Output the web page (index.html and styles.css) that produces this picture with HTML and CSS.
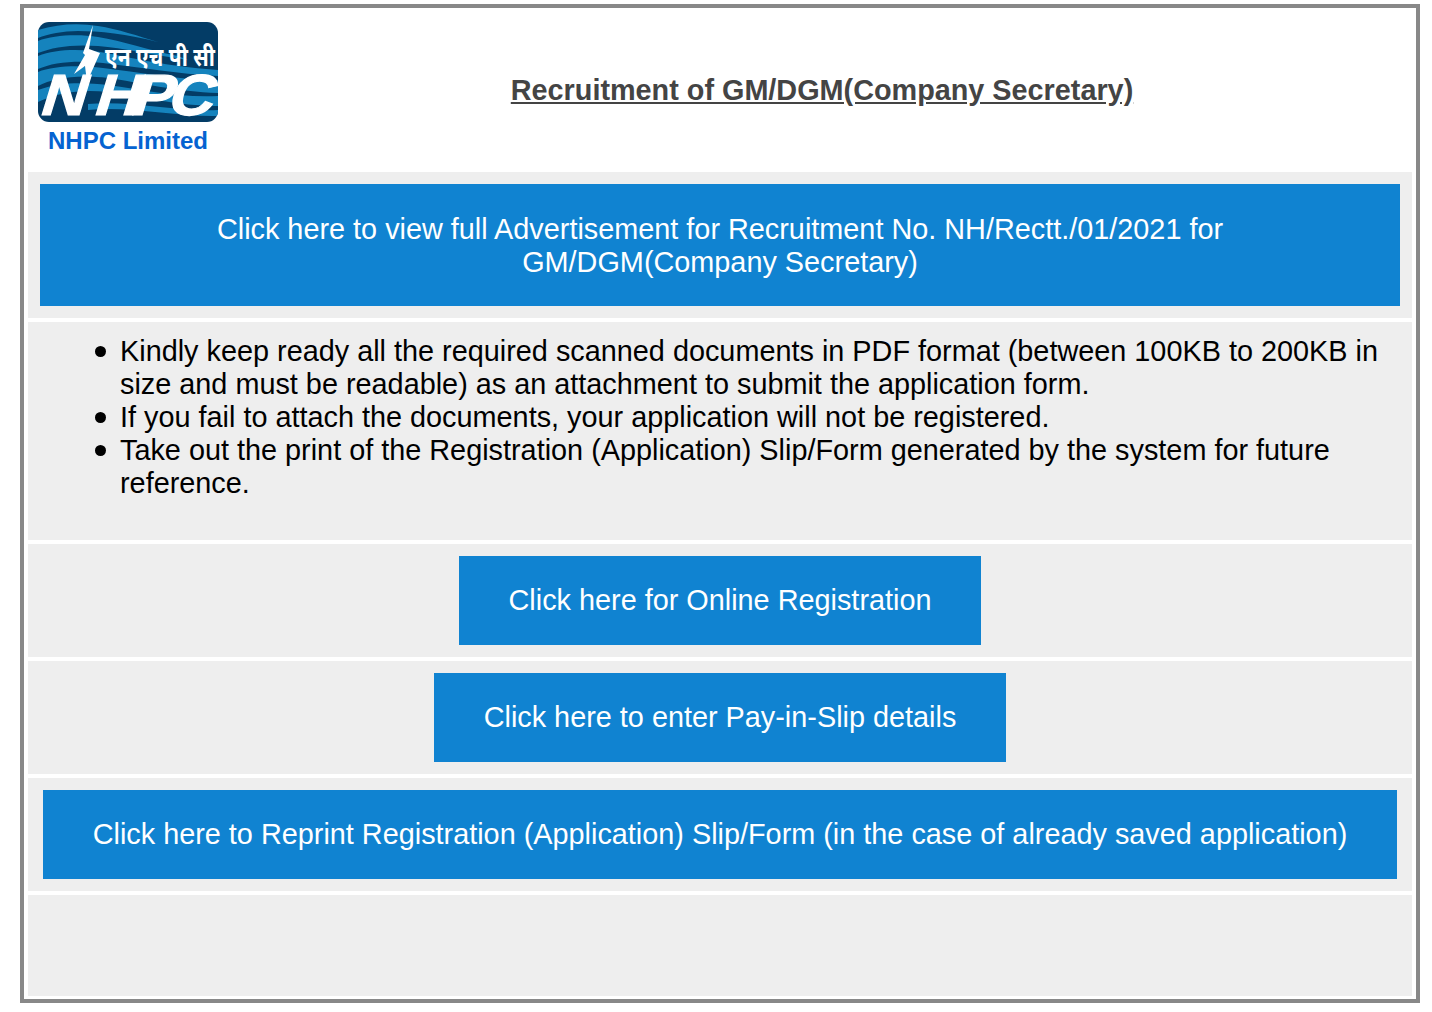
FILE: index.html
```html
<!DOCTYPE html>
<html lang="en">
<head>
<meta charset="utf-8">
<title>Recruitment of GM/DGM(Company Secretary)</title>
<link rel="stylesheet" href="styles.css">
</head>
<body>
<main class="frame">
  <header class="top">
    <div class="brand">
      <svg class="logo" viewBox="0 0 180 100" width="180" height="100" aria-label="NHPC logo">
        <clipPath id="r"><rect width="180" height="100" rx="11"/></clipPath>
        <rect width="180" height="100" rx="11" fill="#033c66"/>
        <g clip-path="url(#r)" fill="#1583bd">
          <path d="M0 8C20 2 40 1 60 4C80 7 100 14 120 20C90 12 60 9 40 9C25 9 10 12 0 16Z"/>
          <path d="M0 19C15 13 40 12 60 15C85 19 110 28 140 34L150 38C115 33 85 26 60 24C35 22 15 25 0 31Z"/>
          <path d="M0 34C15 28 35 27 55 29C85 33 115 43 180 48V54C140 52 100 45 65 41C40 38 15 40 0 47Z"/>
          <path d="M0 50C15 44 40 43 65 46C100 50 140 58 180 58V71C140 70 100 60 70 56C40 52 15 56 0 64Z"/>
          <path d="M0 68C20 60 45 60 70 63C100 67 140 76 180 74V84C140 84 100 74 70 70C45 67 20 70 0 80Z"/>
          <path d="M50 82C90 78 140 90 180 88V94C140 95 90 84 50 88Z"/>
        </g>
        <path class="logo-bolt" d="M55 3L51 27L62 31L49 60L47 44L36 52L47 33L45 31Z"/>
        <text class="logo-hi" x="67" y="44" textLength="110" lengthAdjust="spacingAndGlyphs">एन एच पी सी</text>
        <text class="logo-en" transform="translate(0 93) skewX(-17) scale(1.08 1)" x="0 50 84 118" y="0">NHPC</text>
      </svg>
      <div class="brand-name">NHPC Limited</div>
    </div>
    <h1 class="title">Recruitment of GM/DGM(Company Secretary)</h1>
  </header>

  <section class="row row-ad">
    <a class="btn btn-full" href="#">Click here to view full Advertisement for Recruitment No. NH/Rectt./01/2021 for<br>GM/DGM(Company Secretary)</a>
  </section>

  <section class="row row-notes">
    <ul class="notes">
      <li>Kindly keep ready all the required scanned documents in PDF format (between 100KB to 200KB in size and must be readable) as an attachment to submit the application form.</li>
      <li>If you fail to attach the documents, your application will not be registered.</li>
      <li>Take out the print of the Registration (Application) Slip/Form generated by the system for future reference.</li>
    </ul>
  </section>

  <section class="row row-btn"><a class="btn btn-reg" href="#">Click here for Online Registration</a></section>
  <section class="row row-btn"><a class="btn btn-pay" href="#">Click here to enter Pay-in-Slip details</a></section>
  <section class="row row-btn"><a class="btn btn-print" href="#">Click here to Reprint Registration (Application) Slip/Form (in the case of already saved application)</a></section>
  <section class="row row-empty"></section>
</main>
</body>
</html>
```

FILE: styles.css
```css
* { box-sizing: border-box; }
html, body { margin: 0; background: #fff; }
body {
  padding: 4px 12px 9px 20px;
  font-family: "Liberation Sans", Arial, sans-serif;
  color: #000;
}
.frame {
  width: 1400px;
  height: 999px;
  border: 4px solid #888;
  padding: 4px;
  display: flex;
  flex-direction: column;
  gap: 4px;
}
.top {
  height: 156px;
  display: flex;
  align-items: flex-start;
  flex: none;
}
.brand {
  width: 180px;
  margin: 10px 0 0 10px;
  display: flex;
  flex-direction: column;
  align-items: center;
}
.logo { display: block; }
.logo-bolt { fill: #fff; }
.logo-hi { font-family: "Noto Sans", "DejaVu Sans", sans-serif; font-size: 25px; font-weight: 700; fill: #fff; }
.logo-en { font-family: "Liberation Sans", sans-serif; font-size: 58px; font-weight: 700; fill: #fff; stroke: #fff; stroke-width: 1.2px; }
.brand-name {
  margin-top: 5px;
  font-size: 24px;
  line-height: 27px;
  font-weight: 700;
  color: #0563d1;
  white-space: nowrap;
}
.title {
  margin: 62px 0 0;
  flex: 1;
  padding-left: 14px;
  text-align: center;
  font-size: 28.8px;
  line-height: 33px;
  font-weight: 700;
  color: #444;
  text-decoration: underline;
}
.row {
  background: #eee;
  display: flex;
  justify-content: center;
  align-items: center;
  flex: none;
}
.row-ad { height: 146px; }
.row-notes { height: 218px; align-items: flex-start; }
.row-btn { height: 113px; }
.row-empty { height: 101px; }
.btn {
  display: block;
  padding: 28px 0;
  background: #1083d1;
  color: #fff;
  font-size: 28.84px;
  line-height: 33px;
  text-align: center;
  text-decoration: none;
  white-space: nowrap;
}
.btn-full { width: 1360px; padding: 29px 50px 27px; }
.btn-reg { width: 522px; }
.btn-pay { width: 572px; }
.btn-print { width: 1354px; }
.notes {
  margin: 13px 0 0;
  padding: 0 20px 0 92px;
  width: 100%;
  font-size: 28.84px;
  line-height: 33px;
  list-style: none;
}
.notes li { position: relative; }
.notes li::before {
  content: "";
  position: absolute;
  left: -25px;
  top: 11px;
  width: 11px;
  height: 11px;
  border-radius: 50%;
  background: #000;
}
```
